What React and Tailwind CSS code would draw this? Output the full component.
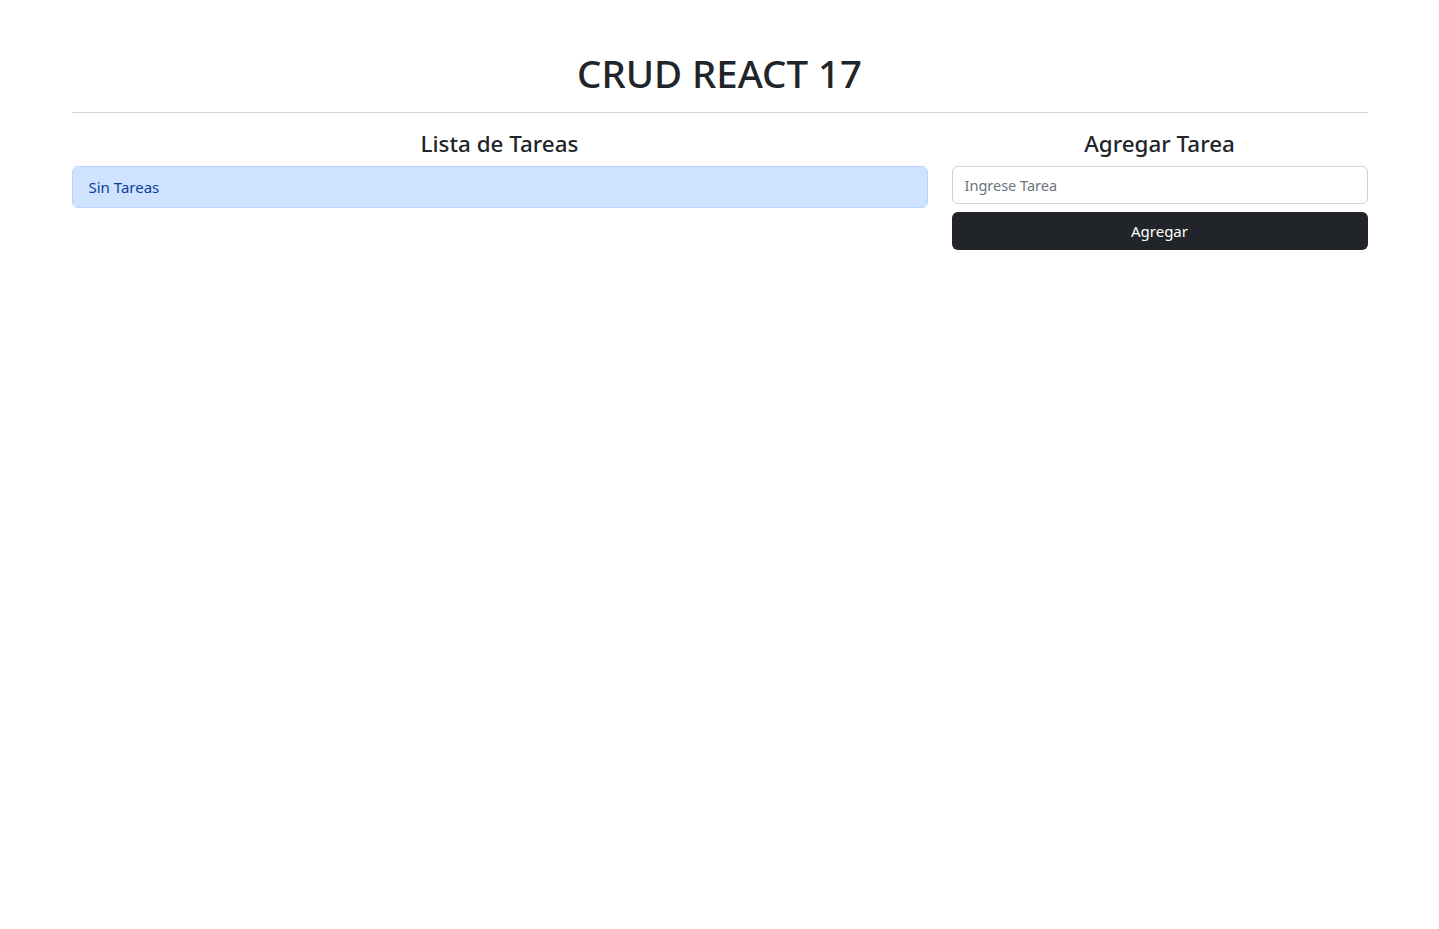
export default function App() {
  return (
    <div className="min-h-screen bg-white text-[#212529] font-['Noto_Sans','Liberation_Sans',sans-serif] text-base pt-12">
      <div className="max-w-[1320px] mx-auto px-3">
        <h1 className="pt-[2px] mb-2 text-center text-[38.4px] leading-[46px] font-medium">CRUD REACT 17</h1>
        <div className="my-4 h-px bg-[#d3d4d5]" />
        <div className="flex gap-6">
          <section className="w-[856px] shrink-0">
            <h4 className="pt-[2px] mb-2 text-center text-[22.4px] leading-[26.8px] font-medium">Lista de Tareas</h4>
            <ul className="rounded-md border border-[#b6d4fe] overflow-hidden">
              <li className="bg-[#cfe2ff] text-[#084298] px-4 py-2 text-[15px] leading-6">Sin Tareas</li>
            </ul>
          </section>
          <section className="flex-1">
            <h4 className="pt-[2px] mb-2 text-center text-[22.4px] leading-[26.8px] font-medium">Agregar Tarea</h4>
            <form onSubmit={(e) => e.preventDefault()}>
              <input
                type="text"
                placeholder="Ingrese Tarea"
                className="block w-full h-[38px] px-3 rounded-md border border-[#ced4da] text-[14.5px] placeholder:text-[#6c757d] outline-none"
              />
              <button
                type="submit"
                className="mt-2 block w-full h-[38px] rounded-md bg-[#212529] text-white text-[15px]"
              >
                Agregar
              </button>
            </form>
          </section>
        </div>
      </div>
    </div>
  )
}
